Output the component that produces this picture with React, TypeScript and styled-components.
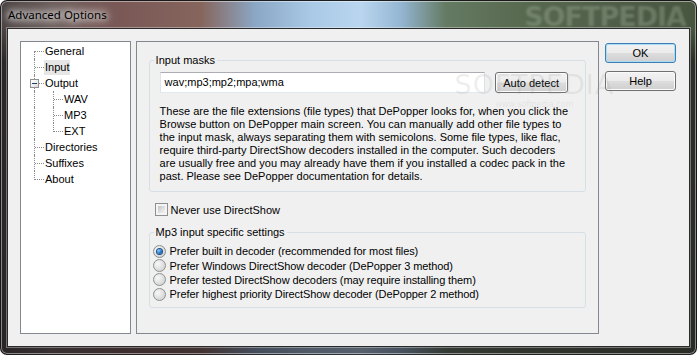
import styled, { createGlobalStyle } from "styled-components";

const GlobalStyle = createGlobalStyle`
  html, body {
    margin: 0;
    padding: 0;
    background: #ffffff;
  }
  body {
    font-family: "Liberation Sans", Arial, sans-serif;
    font-size: 11px;
    color: #000;
  }
`;

const Window = styled.div`
  width: 697px;
  height: 355px;
  box-sizing: border-box;
  display: flex;
  flex-direction: column;
  padding: 0 6px 8px 6px;
  border-radius: 7px;
  border: 1px solid rgba(20, 20, 20, 0.85);
  box-shadow: inset 0 0 0 1px rgba(255, 255, 255, 0.45);
  overflow: hidden;
  background:
    linear-gradient(to bottom, rgba(0, 0, 0, 0) 0, rgba(0, 0, 0, 0) 28px, rgba(20, 16, 20, 0.55) 60px, rgba(20, 16, 20, 0.6) 100%),
    linear-gradient(to right, #4a4242 0px, #6c5f5c 50px, #7a5856 120px, #86655d 200px, #8ba8c6 255px, #a9c9e6 310px, #bad6ef 360px, #94b6d2 400px, #647a62 445px, #586a50 520px, #4f5d48 620px, #48553f 697px);
`;

const TitleBar = styled.div`
  height: 27px;
  display: flex;
  align-items: center;
  justify-content: space-between;
  padding-left: 1px;
`;

const Title = styled.span`
  font-family: "Noto Sans", "Open Sans", sans-serif;
  font-size: 11.5px;
  color: #000;
  padding: 0 4px 0 0;
  text-shadow: 0 0 6px #ffffff, 0 0 10px #ffffff, 0 0 14px rgba(255, 255, 255, 0.9);
`;

const TitleMark = styled.span`
  font-family: "DejaVu Sans", sans-serif;
  font-weight: bold;
  font-size: 27px;
  letter-spacing: -1px;
  color: rgba(170, 190, 165, 0.32);
  filter: blur(1.2px);
  margin-right: 4px;
  margin-top: 3px;
`;

const Client = styled.div`
  flex: 1;
  display: flex;
  align-items: flex-start;
  background: #f0f0f0;
  border: 1px solid #2a2a2a;
  box-shadow: 0 0 0 1px rgba(255, 255, 255, 0.35);
  padding: 12px 13px 12px 12px;
`;

const TreeBox = styled.div`
  width: 111px;
  height: 293px;
  box-sizing: border-box;
  background: #fff;
  border: 1px solid #828790;
  padding-top: 1px;
  margin-right: 5px;
`;

const TreeRow = styled.div`
  height: 16px;
  display: flex;
  align-items: center;
`;

const Guide = styled.div<{ $w: number; $x: number; $from: number; $to: number; $branch: boolean }>`
  position: relative;
  width: ${(p) => p.$w}px;
  height: 16px;
  flex: none;

  &::before {
    content: "";
    position: absolute;
    left: ${(p) => p.$x}px;
    top: ${(p) => p.$from}px;
    height: ${(p) => p.$to - p.$from}px;
    border-left: 1px dotted #8a8a8a;
  }

  &::after {
    content: "";
    display: ${(p) => (p.$branch ? "block" : "none")};
    position: absolute;
    left: ${(p) => p.$x + 1}px;
    top: 8px;
    width: ${(p) => p.$w - p.$x - 1}px;
    border-top: 1px dotted #8a8a8a;
  }
`;

const Toggle = styled.div`
  position: absolute;
  left: 9px;
  top: 4px;
  width: 9px;
  height: 9px;
  box-sizing: border-box;
  border: 1px solid #919191;
  background: linear-gradient(135deg, #ffffff 0%, #f0f0f0 50%, #d8d8d8 100%);
  z-index: 1;

  &::after {
    content: "";
    position: absolute;
    left: 1px;
    top: 3px;
    width: 5px;
    height: 1px;
    background: #1e3f6e;
  }
`;

const TreeLabel = styled.span<{ $selected?: boolean }>`
  line-height: 15px;
  padding: 0 1px;
  white-space: nowrap;
  background: ${(p) => (p.$selected ? "#e6e6e6" : "transparent")};
`;

const Panel = styled.div`
  position: relative;
  width: 465px;
  height: 293px;
  box-sizing: border-box;
  border: 1px solid #828790;
  padding: 12px 12px 0 12px;
  margin-right: 6px;
`;

const Group = styled.fieldset<{ $pad: string }>`
  margin: 0;
  border: 1px solid #d5dfe5;
  border-radius: 3px;
  padding: ${(p) => p.$pad};
  min-width: 0;
`;

const Legend = styled.legend<{ $shift: number }>`
  line-height: 13px;
  padding: 0 2px;
  margin-left: ${(p) => p.$shift}px;
`;

const MaskRow = styled.div`
  display: flex;
  align-items: center;
  gap: 10px;
`;

const MaskInput = styled.div`
  width: 325px;
  height: 21px;
  box-sizing: border-box;
  background: #fff;
  border: 1px solid;
  border-color: #abadb3 #dbdfe6 #e3e9ef #e2e3ea;
  padding: 0 4px;
  line-height: 19px;
`;

const Button = styled.div<{ $w: number; $h: number; $default?: boolean }>`
  width: ${(p) => p.$w}px;
  height: ${(p) => p.$h}px;
  box-sizing: border-box;
  display: flex;
  align-items: center;
  justify-content: center;
  border: 1px solid ${(p) => (p.$default ? "#3c7fb1" : "#707070")};
  border-radius: 3px;
  background: linear-gradient(to bottom, #f2f2f2 0%, #ebebeb 48%, #dddddd 52%, #cfcfcf 100%);
  box-shadow: inset 0 0 0 1px ${(p) => (p.$default ? "#a9dcf7" : "#fbfbfb")};
  flex: none;
`;

const Help = styled.p`
  margin: 12px 0 0;
  line-height: 13px;
  white-space: nowrap;
`;

const CheckRow = styled.div`
  display: flex;
  align-items: center;
  gap: 3px;
  margin: 11px 0 10px 6px;
  height: 13px;
`;

const CheckBox = styled.span`
  width: 13px;
  height: 13px;
  box-sizing: border-box;
  border: 1px solid #8f8f8f;
  background: #f4f4f4;
  padding: 2px;
  flex: none;

  &::after {
    content: "";
    display: block;
    width: 100%;
    height: 100%;
    background: linear-gradient(135deg, #c4c4c4 0%, #e2e2e2 60%, #f4f4f4 100%);
  }
`;

const RadioRow = styled.div`
  display: flex;
  align-items: center;
  gap: 4px;
  height: 14.4px;
  white-space: nowrap;
  letter-spacing: -0.1px;
`;

const Radio = styled.span<{ $on?: boolean }>`
  width: 13px;
  height: 13px;
  box-sizing: border-box;
  border-radius: 50%;
  border: 1px solid #8f8f8f;
  background: radial-gradient(circle at 35% 35%, #f8f8f8 0%, #dcdcdc 60%, #c8c8c8 100%);
  display: flex;
  align-items: center;
  justify-content: center;
  flex: none;

  &::after {
    content: "";
    display: ${(p) => (p.$on ? "block" : "none")};
    width: 5px;
    height: 5px;
    border-radius: 50%;
    background: radial-gradient(circle at 35% 35%, #8fd0ff 0%, #2a7ac8 50%, #0c3d7c 100%);
    box-shadow: 0 0 0 1px #1b4f8f;
  }
`;

const Side = styled.div`
  display: flex;
  flex-direction: column;
  gap: 8px;
  margin-top: 2px;
`;

const Watermark = styled.div`
  position: absolute;
  left: 318px;
  top: 29px;
  pointer-events: none;
  display: flex;
  flex-direction: column;
  align-items: center;
  color: rgba(150, 150, 150, 0.16);
`;

const MarkBig = styled.span`
  font-family: "DejaVu Sans", sans-serif;
  font-size: 27px;
  letter-spacing: 1px;
  line-height: 28px;
`;

const MarkSmall = styled.span`
  font-size: 9px;
  line-height: 10px;
`;

type Node = { label: string; level: 1 | 2; selected?: boolean; toggle?: boolean };

const nodes: Node[] = [
  { label: "General", level: 1 },
  { label: "Input", level: 1, selected: true },
  { label: "Output", level: 1, toggle: true },
  { label: "WAV", level: 2 },
  { label: "MP3", level: 2 },
  { label: "EXT", level: 2 },
  { label: "Directories", level: 1 },
  { label: "Suffixes", level: 1 },
  { label: "About", level: 1 },
];

const helpLines = [
  "These are the file extensions (file types) that DePopper looks for, when you click the",
  "Browse button on DePopper main screen. You can manually add other file types to",
  "the input mask, always separating them with semicolons. Some file types, like flac,",
  "require third-party DirectShow decoders installed in the computer. Such decoders",
  "are usually free and you may already have them if you installed a codec pack in the",
  "past. Please see DePopper documentation for details.",
];

const radios = [
  "Prefer built in decoder (recommended for most files)",
  "Prefer Windows DirectShow decoder (DePopper 3 method)",
  "Prefer tested DirectShow decoders (may require installing them)",
  "Prefer highest priority DirectShow decoder (DePopper 2 method)",
];

export default function App() {
  return (
    <>
      <GlobalStyle />
      <Window>
        <TitleBar>
          <Title>Advanced Options</Title>
          <TitleMark>SOFTPEDIA</TitleMark>
        </TitleBar>
        <Client>
          <TreeBox>
            {nodes.map((n, i) => {
              const first = i === 0;
              const last = i === nodes.length - 1;
              if (n.level === 1) {
                return (
                  <TreeRow key={n.label}>
                    <Guide $w={23} $x={13} $from={first ? 8 : 0} $to={last ? 9 : 16} $branch>
                      {n.toggle && <Toggle />}
                    </Guide>
                    <TreeLabel $selected={n.selected}>{n.label}</TreeLabel>
                  </TreeRow>
                );
              }
              const lastChild = nodes[i + 1]?.level !== 2;
              return (
                <TreeRow key={n.label}>
                  <Guide $w={23} $x={13} $from={0} $to={16} $branch={false} />
                  <Guide $w={19} $x={9} $from={0} $to={lastChild ? 9 : 16} $branch />
                  <TreeLabel>{n.label}</TreeLabel>
                </TreeRow>
              );
            })}
          </TreeBox>

          <Panel>
            <Group $pad="5px 10px 8px 10px">
              <Legend $shift={-6}>Input masks</Legend>
              <MaskRow>
                <MaskInput>wav;mp3;mp2;mpa;wma</MaskInput>
                <Button $w={73} $h={21}>Auto detect</Button>
              </MaskRow>
              <Help>
                {helpLines.map((l, i) => (
                  <span key={i}>
                    {l}
                    <br />
                  </span>
                ))}
              </Help>
            </Group>

            <CheckRow>
              <CheckBox />
              <span>Never use DirectShow</span>
            </CheckRow>

            <Group $pad="5px 3px 5px 3px">
              <Legend $shift={1}>Mp3 input specific settings</Legend>
              {radios.map((r, i) => (
                <RadioRow key={r}>
                  <Radio $on={i === 0} />
                  <span>{r}</span>
                </RadioRow>
              ))}
            </Group>

            <Watermark>
              <MarkBig>SOFTPEDIA</MarkBig>
              <MarkSmall>www.softpedia.com</MarkSmall>
            </Watermark>
          </Panel>

          <Side>
            <Button $w={71} $h={20} $default>OK</Button>
            <Button $w={71} $h={20}>Help</Button>
          </Side>
        </Client>
      </Window>
    </>
  );
}
